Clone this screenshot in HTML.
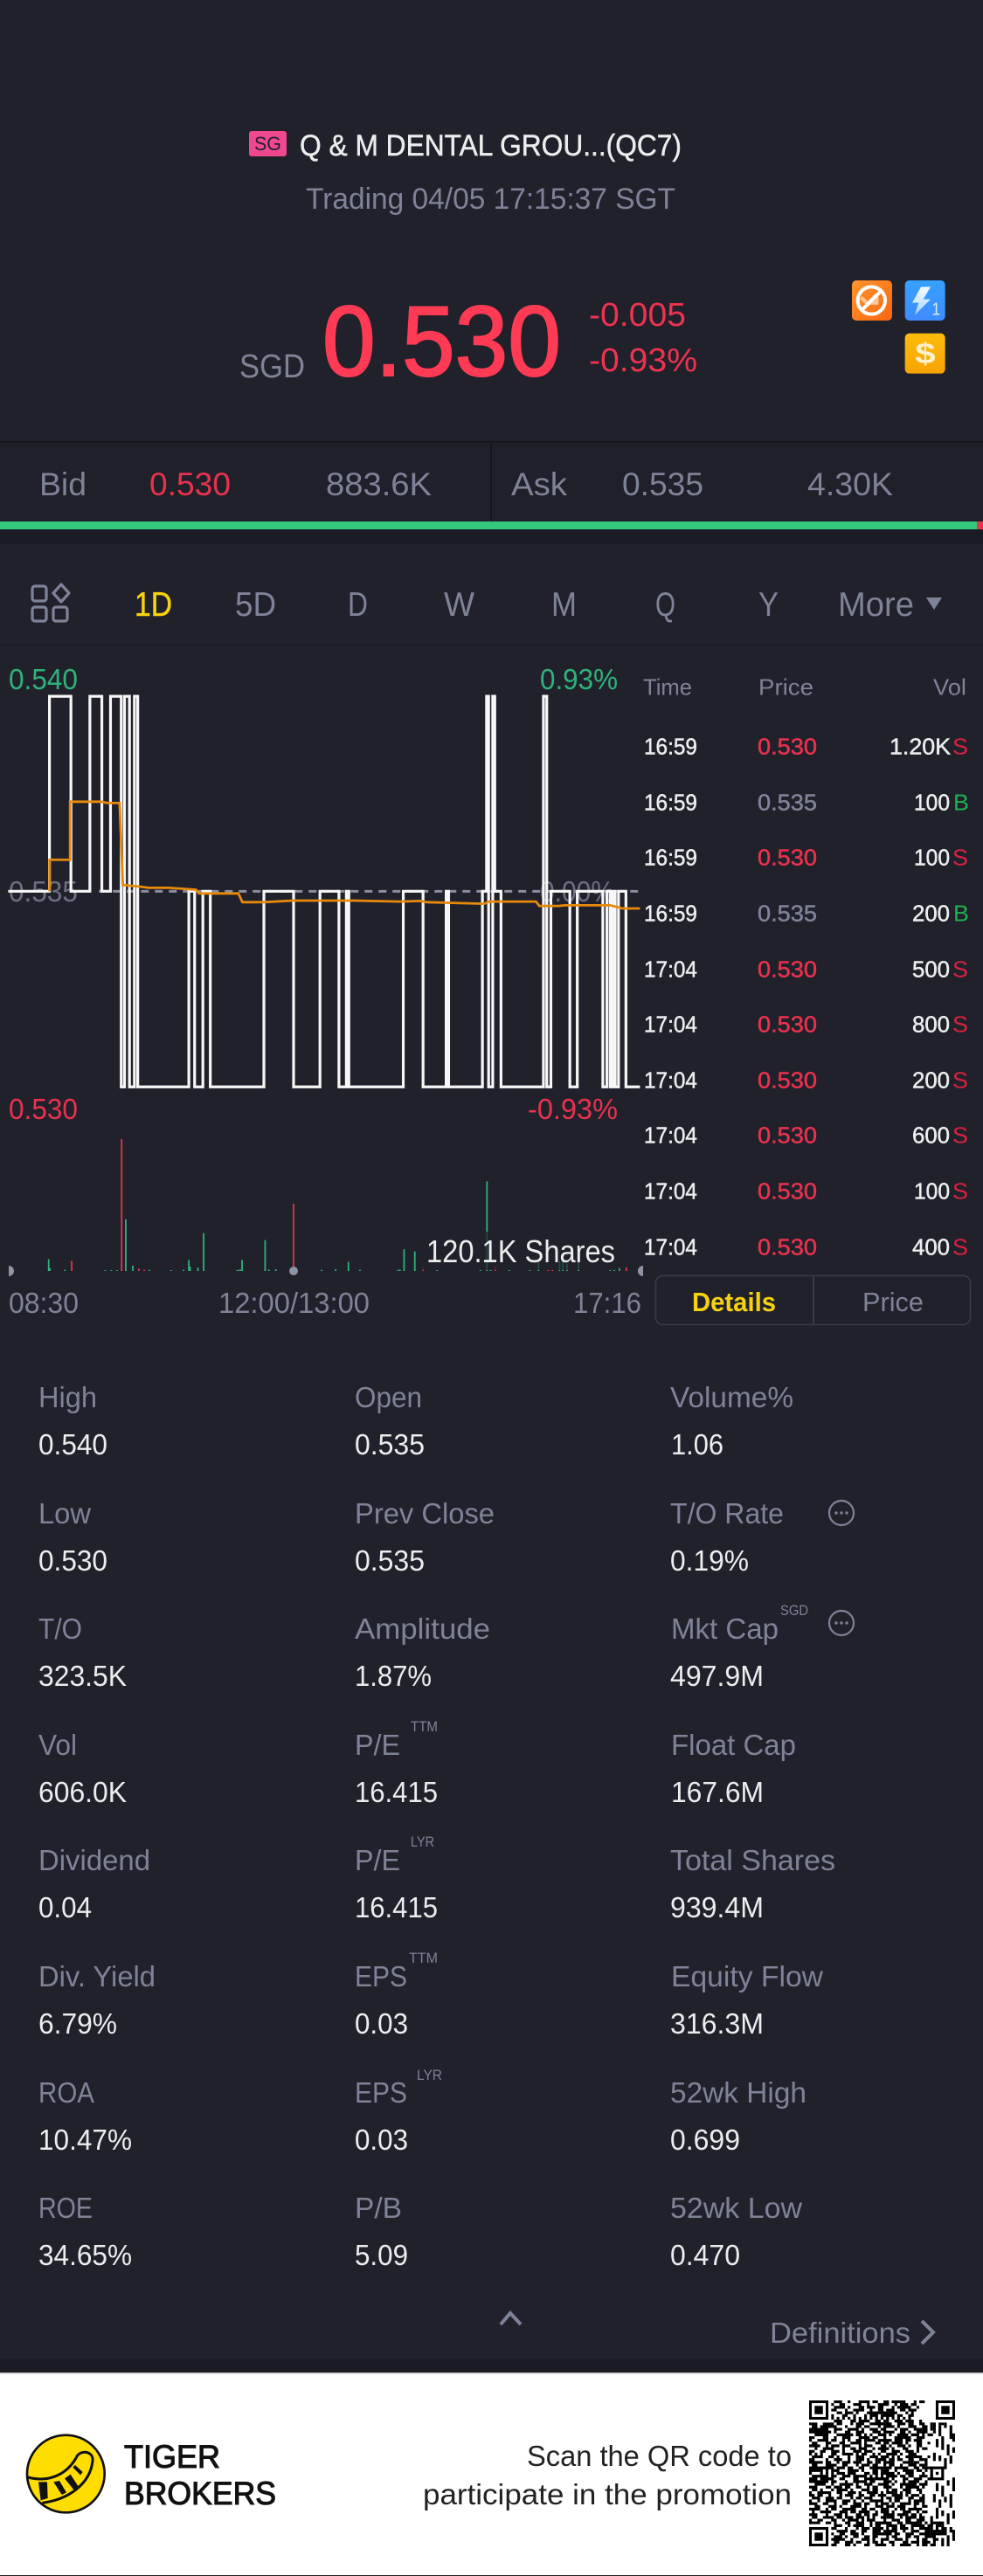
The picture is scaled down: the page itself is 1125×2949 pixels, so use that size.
<!DOCTYPE html>
<html><head><meta charset="utf-8"><title>Q &amp; M Dental</title>
<style>
html,body{margin:0;padding:0;background:#20212b}
svg{display:block}
text{font-family:"Liberation Sans",sans-serif;white-space:pre}
.g{fill:#7f8397}.w{fill:#eceded}.r{fill:#e8324e}.n{fill:#2fb27c}.y{fill:#f7d20f}
.s33{font-size:33px}.s38{font-size:38px}.s27{font-size:27px}.s26{font-size:26px}.s14{font-size:14px}
.v{vector-effect:non-scaling-stroke;fill:none}
</style></head><body>
<svg xmlns="http://www.w3.org/2000/svg" width="1125" height="2949" viewBox="0 0 1125 2949">
<defs>
<linearGradient id="go" x1="0" y1="0" x2="1" y2="1"><stop offset="0" stop-color="#ff962e"/><stop offset="1" stop-color="#f9650f"/></linearGradient>
<linearGradient id="gb" x1="0" y1="0" x2="0" y2="1"><stop offset="0" stop-color="#36a1ff"/><stop offset="1" stop-color="#3f8cff"/></linearGradient>
<linearGradient id="gl" x1="0" y1="0" x2="0" y2="1"><stop offset="0" stop-color="#f4fbff"/><stop offset="1" stop-color="#a9d6ff"/></linearGradient>
<linearGradient id="gy" x1="0" y1="0" x2="0" y2="1"><stop offset="0" stop-color="#fdbb0c"/><stop offset="1" stop-color="#f6a405"/></linearGradient>
<clipPath id="qc"><rect width="53" height="53"/></clipPath>
</defs>
<rect width="1125" height="2949" fill="#20212b"/>

<!-- header -->
<rect x="285" y="150" width="43" height="29" rx="3" fill="#f0488f"/>
<text x="291" y="172" font-size="22" fill="#20212b" textLength="31" lengthAdjust="spacingAndGlyphs">SG</text>
<text x="343" y="178" font-size="34" class="w" stroke="#eceded" stroke-width=".5" textLength="437" lengthAdjust="spacingAndGlyphs">Q &amp; M DENTAL GROU...(QC7)</text>
<text x="350" y="239" font-size="34" class="g" textLength="423" lengthAdjust="spacingAndGlyphs">Trading 04/05 17:15:37 SGT</text>
<text x="274" y="432" class="s38 g" textLength="75" lengthAdjust="spacingAndGlyphs">SGD</text>
<text x="369" y="430" font-size="114" fill="#ff3a55" stroke="#ff3a55" stroke-width="2" textLength="273" lengthAdjust="spacingAndGlyphs">0.530</text>
<text x="674" y="373" class="s38" fill="#ee3350" textLength="111" lengthAdjust="spacingAndGlyphs">-0.005</text>
<text x="674" y="425" class="s38" fill="#ee3350" textLength="124" lengthAdjust="spacingAndGlyphs">-0.93%</text>

<!-- badges -->
<g transform="translate(900,300) scale(.3333)">
<rect x="225" y="63" width="138" height="138" rx="15" fill="url(#go)"/>
<path d="M256 122l24 22 28-30 M288 140h22v-22" fill="none" stroke="#ffc594" stroke-width="13"/>
<circle cx="292" cy="132" r="47" fill="none" stroke="#fff" stroke-width="12"/>
<path d="M258 166L326 98" stroke="#fff" stroke-width="12"/>
<rect x="407" y="63" width="138" height="138" rx="15" fill="url(#gb)"/>
<path d="M462 85h33l-25 43h25l-54 54 13-42h-22z" fill="url(#gl)"/>
<text x="500" y="182" font-size="62" fill="#d9eeff" textLength="28" lengthAdjust="spacingAndGlyphs">1</text>
<rect x="407" y="245" width="138" height="138" rx="15" fill="url(#gy)"/>
<text x="442" y="348" font-size="100" font-weight="bold" fill="#fff1c9" textLength="70" lengthAdjust="spacingAndGlyphs">$</text>
</g>

<!-- bid/ask -->
<rect y="505" width="1125" height="92" fill="#1f2029"/>
<rect y="505" width="1125" height="1.5" fill="#14151b"/>
<rect x="561.5" y="505" width="1.5" height="92" fill="#14151b"/>
<text x="45" y="567" font-size="37" class="g" textLength="54" lengthAdjust="spacingAndGlyphs">Bid</text>
<text x="171" y="567" font-size="37" class="r" textLength="93" lengthAdjust="spacingAndGlyphs">0.530</text>
<text x="373" y="567" font-size="37" class="g" textLength="121" lengthAdjust="spacingAndGlyphs">883.6K</text>
<text x="585" y="567" font-size="37" class="g" textLength="64" lengthAdjust="spacingAndGlyphs">Ask</text>
<text x="712" y="567" font-size="37" class="g" textLength="93" lengthAdjust="spacingAndGlyphs">0.535</text>
<text x="924" y="567" font-size="37" class="g" textLength="98" lengthAdjust="spacingAndGlyphs">4.30K</text>
<rect y="597" width="1118" height="9" fill="#35c77f"/>
<rect x="1118" y="597" width="7" height="9" fill="#ea3350"/>
<rect y="606" width="1125" height="17" fill="#1a1b24"/>

<!-- tabs -->
<g fill="none" stroke="#7f8397" stroke-width="3.2">
<rect x="37" y="671" width="16" height="17" rx="3"/>
<rect x="37" y="695" width="16" height="16" rx="3"/>
<rect x="61" y="695" width="16" height="16" rx="3"/>
<path d="M70 669l9 10-9 10-9-10z" stroke-linejoin="round"/>
</g>
<text x="154" y="705" font-size="39" class="y" stroke="#f7d20f" stroke-width=".5" textLength="43" lengthAdjust="spacingAndGlyphs">1D</text>
<text x="269" y="705" font-size="39" class="g" textLength="47" lengthAdjust="spacingAndGlyphs">5D</text>
<text x="398" y="705" font-size="39" class="g" textLength="23" lengthAdjust="spacingAndGlyphs">D</text>
<text x="508" y="705" font-size="39" class="g" textLength="35" lengthAdjust="spacingAndGlyphs">W</text>
<text x="631" y="705" font-size="39" class="g" textLength="29" lengthAdjust="spacingAndGlyphs">M</text>
<text x="750" y="705" font-size="39" class="g" textLength="23" lengthAdjust="spacingAndGlyphs">Q</text>
<text x="868" y="705" font-size="39" class="g" textLength="23" lengthAdjust="spacingAndGlyphs">Y</text>
<text x="959" y="705" font-size="39" class="g" textLength="87" lengthAdjust="spacingAndGlyphs">More</text>
<path d="M1060 684h18l-9 14z" fill="#7f8397"/>
<rect y="738" width="1125" height="1.5" fill="#1a1b24"/>

<!-- chart labels -->
<text x="10" y="789" class="s33 n" textLength="79" lengthAdjust="spacingAndGlyphs">0.540</text>
<text x="618" y="789" class="s33 n" textLength="89" lengthAdjust="spacingAndGlyphs">0.93%</text>
<text x="10" y="1032" class="s33 g" opacity=".8" textLength="79" lengthAdjust="spacingAndGlyphs">0.535</text>
<text x="618" y="1032" class="s33 g" opacity=".8" textLength="85" lengthAdjust="spacingAndGlyphs">0.00%</text>
<text x="10" y="1281" class="s33 r" textLength="79" lengthAdjust="spacingAndGlyphs">0.530</text>
<text x="604" y="1281" class="s33 r" textLength="103" lengthAdjust="spacingAndGlyphs">-0.93%</text>

<!-- chart lines -->
<g transform="translate(0,740) scale(.4719,.3571)">
<path class="v" d="M240 785H1552" stroke="#8a8ea0" stroke-width="3" stroke-dasharray="9 7"/>
<path class="v" stroke="#f7f7f7" stroke-width="3.2" d="M20 785H120V160H172V785H218V160H247V785H268V160H294V1412H302V160H314V1412H326V160H334V1412H458V785H472V1412H492V785H510V1412H640V785H712V1412H776V785H822V1412H840V785H846V1412H978V785H1026V1412H1082V785H1088V1412H1170V785H1180V160H1185V1412H1195V160H1200V785H1215V1412H1318V160H1326V1412H1336V785H1382V1412H1400V785H1462V1412H1472V785H1480V1412H1486V785H1492V1412H1500V785H1518V1412H1552"/>
<path class="v" stroke="#e8890c" stroke-width="2.8" d="M120 785V684H170V498H245L260 502H290L298 765L340 770L360 774H410L475 780L483 792H578L588 820H640L710 815H860L970 818L1020 816L1035 820L1175 825L1185 818H1300L1308 832H1355L1370 830H1480L1510 840H1552"/>
</g>

<!-- volume bars -->
<g transform="translate(0,1280) scale(.4719,.3333)">
<path class="v" stroke="#2fb27c" stroke-width="1.8" d="M118 525V485M121 525V515M305 525V348M322 525V507M458 525V487M461 525V510M480 525V513M494 525V395M587 525V487M583 525V520M578 525V521M643 525V419M652 525V520M669 525V519M845 525V494M814 525V519M873 525V521M980 525V450M965 525V521M970 525V520M1006 525V458M1181 525V217M1306 525V490M1357 525V490M1365 525V490M1375 525V500M1403 525V495M1502 525V515M1490 525V521M1480 525V521M157 525V521M255 525V522M270 525V522M284 525V522M362 525V521M415 525V522M445 525V521M575 525V522M780 525V521M1060 525V522M1165 525V521M1190 525V521M1235 525V521M1285 525V521"/>
<path class="v" stroke="#e8324e" stroke-width="1.8" d="M174 525V490M295 525V72M337 525V517M350 525V521M712 525V294M1026 525V515M1201 525V510M1330 525V520M1340 525V520M1519 525V513"/>
</g>
<circle cx="336" cy="1455" r="5" fill="#8f93a6"/>
<path d="M10 1449a6 6 0 0 1 0 12z" fill="#8f93a6"/>
<path d="M736 1449a6 6 0 0 0 0 12z" fill="#8f93a6"/>
<rect x="480" y="1410" width="228" height="44" fill="#20212b" opacity=".72"/>
<text x="488" y="1445" font-size="36" fill="#eceded" textLength="216" lengthAdjust="spacingAndGlyphs">120.1K Shares</text>
<text x="10" y="1503" class="s33 g" textLength="80" lengthAdjust="spacingAndGlyphs">08:30</text>
<text x="250" y="1503" class="s33 g" textLength="173" lengthAdjust="spacingAndGlyphs">12:00/13:00</text>
<text x="656" y="1503" class="s33 g" textLength="78" lengthAdjust="spacingAndGlyphs">17:16</text>

<!-- tick list -->
<g transform="translate(-1,-1.5)">
<text x="737" y="797" class="s26 g" textLength="56" lengthAdjust="spacingAndGlyphs">Time</text>
<text x="869" y="797" class="s26 g" textLength="63" lengthAdjust="spacingAndGlyphs">Price</text>
<text x="1069" y="797" class="s26 g" textLength="38" lengthAdjust="spacingAndGlyphs">Vol</text>
<g class="s26" stroke-width=".5">
<text x="738" y="865" class="w" stroke="#eceded" textLength="61" lengthAdjust="spacingAndGlyphs">16:59</text>
<text x="738" y="929" class="w" stroke="#eceded" textLength="61" lengthAdjust="spacingAndGlyphs">16:59</text>
<text x="738" y="992" class="w" stroke="#eceded" textLength="61" lengthAdjust="spacingAndGlyphs">16:59</text>
<text x="738" y="1056" class="w" stroke="#eceded" textLength="61" lengthAdjust="spacingAndGlyphs">16:59</text>
<text x="738" y="1120" class="w" stroke="#eceded" textLength="61" lengthAdjust="spacingAndGlyphs">17:04</text>
<text x="738" y="1183" class="w" stroke="#eceded" textLength="61" lengthAdjust="spacingAndGlyphs">17:04</text>
<text x="738" y="1247" class="w" stroke="#eceded" textLength="61" lengthAdjust="spacingAndGlyphs">17:04</text>
<text x="738" y="1310" class="w" stroke="#eceded" textLength="61" lengthAdjust="spacingAndGlyphs">17:04</text>
<text x="738" y="1374" class="w" stroke="#eceded" textLength="61" lengthAdjust="spacingAndGlyphs">17:04</text>
<text x="738" y="1438" class="w" stroke="#eceded" textLength="61" lengthAdjust="spacingAndGlyphs">17:04</text>
<text x="868" y="865" class="r" stroke="#e8324e" textLength="68" lengthAdjust="spacingAndGlyphs">0.530</text>
<text x="868" y="929" class="g" stroke="#7f8397" textLength="68" lengthAdjust="spacingAndGlyphs">0.535</text>
<text x="868" y="992" class="r" stroke="#e8324e" textLength="68" lengthAdjust="spacingAndGlyphs">0.530</text>
<text x="868" y="1056" class="g" stroke="#7f8397" textLength="68" lengthAdjust="spacingAndGlyphs">0.535</text>
<text x="868" y="1120" class="r" stroke="#e8324e" textLength="68" lengthAdjust="spacingAndGlyphs">0.530</text>
<text x="868" y="1183" class="r" stroke="#e8324e" textLength="68" lengthAdjust="spacingAndGlyphs">0.530</text>
<text x="868" y="1247" class="r" stroke="#e8324e" textLength="68" lengthAdjust="spacingAndGlyphs">0.530</text>
<text x="868" y="1310" class="r" stroke="#e8324e" textLength="68" lengthAdjust="spacingAndGlyphs">0.530</text>
<text x="868" y="1374" class="r" stroke="#e8324e" textLength="68" lengthAdjust="spacingAndGlyphs">0.530</text>
<text x="868" y="1438" class="r" stroke="#e8324e" textLength="68" lengthAdjust="spacingAndGlyphs">0.530</text>
<text x="1019" y="865" class="w" stroke="#eceded" textLength="70" lengthAdjust="spacingAndGlyphs">1.20K</text>
<text x="1047" y="929" class="w" stroke="#eceded" textLength="41" lengthAdjust="spacingAndGlyphs">100</text>
<text x="1047" y="992" class="w" stroke="#eceded" textLength="41" lengthAdjust="spacingAndGlyphs">100</text>
<text x="1045" y="1056" class="w" stroke="#eceded" textLength="43" lengthAdjust="spacingAndGlyphs">200</text>
<text x="1045" y="1120" class="w" stroke="#eceded" textLength="43" lengthAdjust="spacingAndGlyphs">500</text>
<text x="1045" y="1183" class="w" stroke="#eceded" textLength="43" lengthAdjust="spacingAndGlyphs">800</text>
<text x="1045" y="1247" class="w" stroke="#eceded" textLength="43" lengthAdjust="spacingAndGlyphs">200</text>
<text x="1045" y="1310" class="w" stroke="#eceded" textLength="43" lengthAdjust="spacingAndGlyphs">600</text>
<text x="1047" y="1374" class="w" stroke="#eceded" textLength="41" lengthAdjust="spacingAndGlyphs">100</text>
<text x="1045" y="1438" class="w" stroke="#eceded" textLength="43" lengthAdjust="spacingAndGlyphs">400</text>
</g>
<g class="s26">
<text x="1091" y="865" fill="#d9213f" textLength="18" lengthAdjust="spacingAndGlyphs">S</text>
<text x="1092" y="929" fill="#1db04f" textLength="18" lengthAdjust="spacingAndGlyphs">B</text>
<text x="1091" y="992" fill="#d9213f" textLength="18" lengthAdjust="spacingAndGlyphs">S</text>
<text x="1092" y="1056" fill="#1db04f" textLength="18" lengthAdjust="spacingAndGlyphs">B</text>
<text x="1091" y="1120" fill="#d9213f" textLength="18" lengthAdjust="spacingAndGlyphs">S</text>
<text x="1091" y="1183" fill="#d9213f" textLength="18" lengthAdjust="spacingAndGlyphs">S</text>
<text x="1091" y="1247" fill="#d9213f" textLength="18" lengthAdjust="spacingAndGlyphs">S</text>
<text x="1091" y="1310" fill="#d9213f" textLength="18" lengthAdjust="spacingAndGlyphs">S</text>
<text x="1091" y="1374" fill="#d9213f" textLength="18" lengthAdjust="spacingAndGlyphs">S</text>
<text x="1091" y="1438" fill="#d9213f" textLength="18" lengthAdjust="spacingAndGlyphs">S</text>
</g>
</g>

<!-- details/price -->
<rect x="750.5" y="1460.5" width="360" height="56" rx="8" fill="none" stroke="#3a3c4a" stroke-width="1.5"/>
<rect x="930" y="1460" width="2" height="57" fill="#3a3c4a"/>
<text x="792" y="1501" font-size="31" font-weight="bold" class="y" textLength="96" lengthAdjust="spacingAndGlyphs">Details</text>
<text x="987" y="1501" font-size="31" class="g" textLength="70" lengthAdjust="spacingAndGlyphs">Price</text>

<!-- stats -->
<g class="s33 g">
<text x="44" y="1611" textLength="67" lengthAdjust="spacingAndGlyphs">High</text>
<text x="406" y="1611" textLength="77" lengthAdjust="spacingAndGlyphs">Open</text>
<text x="767" y="1611" textLength="141" lengthAdjust="spacingAndGlyphs">Volume%</text>
<text x="44" y="1744" textLength="60" lengthAdjust="spacingAndGlyphs">Low</text>
<text x="406" y="1744" textLength="160" lengthAdjust="spacingAndGlyphs">Prev Close</text>
<text x="767" y="1744" textLength="130" lengthAdjust="spacingAndGlyphs">T/O Rate</text>
<text x="44" y="1876" textLength="50" lengthAdjust="spacingAndGlyphs">T/O</text>
<text x="406" y="1876" textLength="155" lengthAdjust="spacingAndGlyphs">Amplitude</text>
<text x="768" y="1876" textLength="123" lengthAdjust="spacingAndGlyphs">Mkt Cap</text>
<text x="44" y="2009" textLength="44" lengthAdjust="spacingAndGlyphs">Vol</text>
<text x="406" y="2009" textLength="52" lengthAdjust="spacingAndGlyphs">P/E</text>
<text x="768" y="2009" textLength="143" lengthAdjust="spacingAndGlyphs">Float Cap</text>
<text x="44" y="2141" textLength="128" lengthAdjust="spacingAndGlyphs">Dividend</text>
<text x="406" y="2141" textLength="52" lengthAdjust="spacingAndGlyphs">P/E</text>
<text x="767" y="2141" textLength="189" lengthAdjust="spacingAndGlyphs">Total Shares</text>
<text x="44" y="2274" textLength="134" lengthAdjust="spacingAndGlyphs">Div. Yield</text>
<text x="406" y="2274" textLength="60" lengthAdjust="spacingAndGlyphs">EPS</text>
<text x="768" y="2274" textLength="174" lengthAdjust="spacingAndGlyphs">Equity Flow</text>
<text x="44" y="2407" textLength="64" lengthAdjust="spacingAndGlyphs">ROA</text>
<text x="406" y="2407" textLength="60" lengthAdjust="spacingAndGlyphs">EPS</text>
<text x="767" y="2407" textLength="156" lengthAdjust="spacingAndGlyphs">52wk High</text>
<text x="44" y="2539" textLength="62" lengthAdjust="spacingAndGlyphs">ROE</text>
<text x="406" y="2539" textLength="54" lengthAdjust="spacingAndGlyphs">P/B</text>
<text x="767" y="2539" textLength="151" lengthAdjust="spacingAndGlyphs">52wk Low</text>
</g>
<g class="s33 w">
<text x="44" y="1665" textLength="79" lengthAdjust="spacingAndGlyphs">0.540</text>
<text x="406" y="1665" textLength="80" lengthAdjust="spacingAndGlyphs">0.535</text>
<text x="768" y="1665" textLength="60" lengthAdjust="spacingAndGlyphs">1.06</text>
<text x="44" y="1798" textLength="79" lengthAdjust="spacingAndGlyphs">0.530</text>
<text x="406" y="1798" textLength="80" lengthAdjust="spacingAndGlyphs">0.535</text>
<text x="767" y="1798" textLength="90" lengthAdjust="spacingAndGlyphs">0.19%</text>
<text x="44" y="1930" textLength="101" lengthAdjust="spacingAndGlyphs">323.5K</text>
<text x="406" y="1930" textLength="88" lengthAdjust="spacingAndGlyphs">1.87%</text>
<text x="767" y="1930" textLength="107" lengthAdjust="spacingAndGlyphs">497.9M</text>
<text x="44" y="2063" textLength="101" lengthAdjust="spacingAndGlyphs">606.0K</text>
<text x="406" y="2063" textLength="95" lengthAdjust="spacingAndGlyphs">16.415</text>
<text x="768" y="2063" textLength="106" lengthAdjust="spacingAndGlyphs">167.6M</text>
<text x="44" y="2195" textLength="61" lengthAdjust="spacingAndGlyphs">0.04</text>
<text x="406" y="2195" textLength="95" lengthAdjust="spacingAndGlyphs">16.415</text>
<text x="767" y="2195" textLength="107" lengthAdjust="spacingAndGlyphs">939.4M</text>
<text x="44" y="2328" textLength="90" lengthAdjust="spacingAndGlyphs">6.79%</text>
<text x="406" y="2328" textLength="61" lengthAdjust="spacingAndGlyphs">0.03</text>
<text x="767" y="2328" textLength="107" lengthAdjust="spacingAndGlyphs">316.3M</text>
<text x="44" y="2461" textLength="107" lengthAdjust="spacingAndGlyphs">10.47%</text>
<text x="406" y="2461" textLength="61" lengthAdjust="spacingAndGlyphs">0.03</text>
<text x="767" y="2461" textLength="80" lengthAdjust="spacingAndGlyphs">0.699</text>
<text x="44" y="2593" textLength="107" lengthAdjust="spacingAndGlyphs">34.65%</text>
<text x="406" y="2593" textLength="61" lengthAdjust="spacingAndGlyphs">5.09</text>
<text x="767" y="2593" textLength="80" lengthAdjust="spacingAndGlyphs">0.470</text>
</g>
<g class="g" font-size="17">
<text x="893" y="1849" textLength="32" lengthAdjust="spacingAndGlyphs">SGD</text>
<text x="470" y="1982" textLength="31" lengthAdjust="spacingAndGlyphs">TTM</text>
<text x="470" y="2114" textLength="27" lengthAdjust="spacingAndGlyphs">LYR</text>
<text x="468" y="2247" textLength="33" lengthAdjust="spacingAndGlyphs">TTM</text>
<text x="477" y="2381" textLength="29" lengthAdjust="spacingAndGlyphs">LYR</text>
</g>
<g fill="none" stroke="#7f8397" stroke-width="2.2">
<circle cx="963" cy="1732" r="14"/><circle cx="963" cy="1858" r="14"/>
</g>
<g fill="#7f8397">
<circle cx="957" cy="1732" r="1.7"/><circle cx="963" cy="1732" r="1.7"/><circle cx="969" cy="1732" r="1.7"/>
<circle cx="957" cy="1858" r="1.7"/><circle cx="963" cy="1858" r="1.7"/><circle cx="969" cy="1858" r="1.7"/>
</g>
<path d="M573 2661l11-13 12 13" fill="none" stroke="#7f8397" stroke-width="4"/>
<text x="881" y="2682" font-size="33" class="g" textLength="161" lengthAdjust="spacingAndGlyphs">Definitions</text>
<path d="M1055 2657l13 13-13 13" fill="none" stroke="#7f8397" stroke-width="4"/>

<rect y="2701" width="1125" height="16" fill="#1a1b24"/>
<rect y="2717" width="1125" height="231" fill="#fff"/>
<rect y="2716" width="1125" height="1.5" fill="#bdbdbd"/>
<rect y="2948" width="1125" height="1" fill="#222"/>

<!-- logo -->
<g transform="translate(0,2780) scale(.3333)">
<circle cx="226" cy="156" r="133" fill="#ffdd00" stroke="#111" stroke-width="8"/>
<path d="M96 168C160 185 225 165 262 100C274 72 322 76 318 112C310 190 235 245 145 256" fill="none" stroke="#111" stroke-width="9"/>
<path d="M132 184h30l2 56-24 7zM184 184l20-4 24 40-16 8zM222 172l20-14 30 46-16 10zM250 134l8-8 26 24-8 10z" fill="#111"/>
</g>
<text x="142" y="2825" font-size="37" fill="#111" stroke="#111" stroke-width="1.1" textLength="110" lengthAdjust="spacingAndGlyphs">TIGER</text>
<text x="142" y="2867" font-size="37" fill="#111" stroke="#111" stroke-width="1.1" textLength="174" lengthAdjust="spacingAndGlyphs">BROKERS</text>
<text x="603" y="2823" font-size="33" fill="#222" textLength="303" lengthAdjust="spacingAndGlyphs">Scan the QR code to</text>
<text x="484" y="2867" font-size="33" fill="#222" textLength="422" lengthAdjust="spacingAndGlyphs">participate in the promotion</text>

<!-- QR -->
<g transform="translate(926,2748) scale(3.151)">
<g clip-path="url(#qc)">
<path fill="none" stroke="#000" stroke-width="1" d="
M9 .5h3m2 0h1m3 0h4m1 0h2m2 0h2m1 0h5m3 0h1m1 0h2
M8 1.5h1m2 0h2m3 0h3m2 0h1m3 0h4m2 0h1m1 0h3m1 0h2
M9 2.5h4m1 0h1m3 0h2m1 0h3m1 0h2m3 0h1m1 0h5m2 0h1
M8 3.5h2m3 0h1m2 0h4m2 0h1m2 0h2m1 0h3m2 0h2m1 0h3
M10 4.5h2m1 0h3m1 0h1m3 0h4m2 0h1m1 0h3m3 0h1m1 0h1
M8 5.5h1m3 0h2m2 0h1m3 0h1m1 0h3m1 0h5m1 0h2m2 0h2
M8 6.5h1m1 0h1m1 0h1m1 0h1m1 0h1m1 0h1m1 0h1m1 0h1m1 0h1m1 0h1m1 0h1m1 0h1m1 0h1m1 0h1m1 0h1
M9 7.5h3m3 0h2m1 0h4m2 0h2m1 0h1m3 0h3m1 0h3m2 0h1
M0 8.5h3m2 0h4m1 0h2m3 0h1m1 0h3m2 0h5m1 0h2m2 0h3m1 0h2m2 0h2m2 0h1m2 0h2
M1 9.5h2m1 0h6m3 0h1m3 0h2m1 0h2m3 0h1m1 0h4m1 0h1m3 0h3m2 0h2m1 0h1
M0 10.5h7m2 0h3m2 0h4m1 0h1m2 0h3m1 0h2m3 0h1m1 0h3m2 0h1m1 0h3m1 0h1
M0 11.5h8m1 0h1m3 0h2m2 0h3m3 0h3m1 0h4m2 0h2m1 0h1m3 0h3m2 0h1
M2 12.5h5m3 0h4m1 0h1m1 0h2m3 0h1m2 0h3m1 0h1m2 0h4m1 0h2m2 0h1m1 0h2
M0 13.5h2m3 0h2m2 0h1m2 0h3m3 0h4m1 0h2m2 0h1m3 0h2m1 0h3m3 0h2
M0 14.5h1m2 0h4m1 0h2m2 0h1m1 0h1m2 0h2m2 0h3m1 0h5m1 0h2m2 0h2m1 0h3
M1 15.5h2m3 0h2m3 0h2m2 0h4m1 0h1m3 0h2m2 0h1m1 0h3m2 0h1m3 0h2m2 0h1
M0 16.5h4m2 0h1m1 0h3m1 0h3m3 0h1m1 0h3m3 0h2m1 0h1m2 0h3m1 0h1m2 0h2
M2 17.5h1m2 0h4m3 0h1m2 0h2m1 0h3m2 0h1m1 0h4m1 0h1m3 0h2m3 0h1m1 0h2
M0 18.5h2m2 0h2m2 0h3m1 0h1m3 0h3m1 0h3m3 0h2m2 0h3m2 0h3m1 0h1
M0 19.5h1m1 0h1m1 0h1m3 0h2m2 0h4m1 0h1m1 0h2m2 0h1m1 0h1m2 0h4m1 0h1m2 0h3
M1 20.5h4m2 0h2m1 0h1m3 0h1m2 0h3m2 0h3m1 0h3m3 0h1m2 0h2m1 0h3m2 0h1
M0 21.5h2m4 0h1m2 0h3m2 0h1m3 0h2m1 0h1m3 0h3m1 0h2m1 0h2m2 0h1m3 0h2
M0 22.5h5m1 0h2m2 0h1m1 0h3m1 0h3m2 0h2m2 0h1m1 0h4m3 0h3m1 0h2m2 0h1
M1 23.5h2m3 0h4m2 0h2m3 0h1m1 0h3m1 0h2m2 0h1m1 0h2m2 0h1m2 0h3m1 0h2
M0 24.5h8m2 0h3m1 0h2m2 0h2m2 0h4m2 0h2m1 0h5m2 0h2m1 0h4
M0 25.5h4m2 0h1m2 0h2m3 0h4m1 0h1m3 0h2m1 0h3m2 0h1m2 0h4m1 0h2m1 0h1
M0 26.5h1m9 0h3m1 0h3m3 0h2m1 0h2m2 0h4m1 0h1m2 0h3m3 0h1m4 0h1
M1 27.5h6m2 0h1m2 0h3m1 0h5m1 0h1m3 0h1m1 0h4m1 0h2m1 0h2m2 0h3m1 0h1
M0 28.5h3m2 0h4m2 0h2m3 0h2m2 0h4m1 0h3m2 0h1m3 0h2m2 0h3m2 0h2
M0 29.5h7m1 0h2m3 0h1m2 0h5m1 0h2m3 0h3m1 0h1m2 0h1m1 0h4m2 0h1
M2 30.5h4m2 0h1m3 0h4m1 0h1m2 0h3m2 0h4m1 0h1m2 0h3m1 0h2m1 0h3
M0 31.5h3m3 0h2m1 0h2m2 0h2m2 0h2m2 0h1m1 0h2m2 0h3m3 0h1m1 0h5m1 0h1
M1 32.5h2m1 0h1m3 0h1m1 0h4m1 0h1m3 0h3m1 0h2m3 0h1m1 0h2m2 0h3m2 0h2
M0 33.5h1m2 0h5m2 0h2m2 0h3m1 0h1m2 0h4m1 0h1m1 0h3m2 0h1m1 0h2m3 0h1
M0 34.5h2m1 0h2m2 0h1m3 0h1m1 0h3m2 0h2m2 0h1m2 0h3m2 0h4m1 0h1m1 0h3
M1 35.5h3m2 0h3m1 0h2m3 0h1m1 0h2m1 0h3m3 0h1m1 0h2m1 0h3m2 0h2m2 0h2
M0 36.5h1m2 0h1m2 0h4m2 0h3m1 0h1m2 0h1m2 0h5m2 0h1m1 0h2m3 0h1m1 0h3
M0 37.5h3m2 0h2m2 0h1m2 0h2m2 0h3m1 0h2m2 0h1m1 0h3m1 0h1m2 0h4m1 0h2
M2 38.5h2m3 0h3m1 0h1m3 0h4m1 0h1m3 0h3m2 0h2m1 0h3m3 0h1m2 0h2
M0 39.5h4m2 0h1m1 0h2m2 0h1m1 0h3m2 0h2m1 0h2m2 0h2m3 0h1m1 0h2m1 0h5
M1 40.5h1m2 0h4m3 0h2m2 0h2m1 0h4m2 0h1m1 0h3m1 0h1m3 0h3m2 0h1m1 0h2
M0 41.5h3m3 0h1m2 0h3m1 0h1m3 0h2m1 0h1m2 0h2m2 0h4m1 0h3m2 0h2m1 0h1
M1 42.5h2m2 0h4m1 0h2m2 0h2m1 0h3m3 0h1m2 0h2m1 0h2m2 0h1m1 0h4m1 0h2
M0 43.5h1m2 0h2m3 0h2m2 0h1m1 0h4m1 0h1m1 0h3m3 0h1m2 0h3m2 0h2m2 0h3
M0 44.5h4m2 0h2m1 0h1m3 0h2m2 0h3m2 0h1m1 0h4m1 0h1m2 0h2m1 0h5m2 0h1
M9 45.5h3m2 0h1m1 0h4m2 0h1m1 0h2m3 0h3m1 0h2m2 0h5m1 0h2m1 0h1
M8 46.5h2m3 0h1m3 0h1m1 0h3m1 0h1m1 0h2m3 0h2m1 0h3m1 0h1m2 0h4m2 0h1
M10 47.5h4m1 0h2m2 0h2m2 0h3m1 0h5m2 0h1m2 0h3m2 0h2m1 0h3
M8 48.5h1m2 0h2m2 0h3m1 0h1m3 0h1m2 0h4m1 0h2m2 0h3m2 0h4m1 0h1
M9 49.5h3m1 0h1m2 0h2m2 0h2m1 0h2m3 0h1m1 0h2m3 0h2m1 0h2m2 0h4
M8 50.5h5m2 0h1m3 0h3m1 0h1m2 0h3m2 0h3m1 0h1m3 0h1m1 0h2m2 0h2
M9 51.5h2m2 0h3m1 0h2m2 0h1m1 0h2m1 0h1m2 0h2m3 0h2m1 0h3m1 0h3
M8 52.5h2m3 0h2m1 0h1m3 0h2m2 0h4m2 0h1m2 0h4m2 0h1m1 0h2m1 0h2
"/>
<path fill="none" stroke="#000" stroke-width="1" d="
M45.5 8v3M47.5 9v4M49.5 8v2M51.5 9v5M52.5 12v3M46.5 14v3M48.5 13v5M50.5 16v4M52.5 17v2M45.5 19v3M47.5 20v2M49.5 21v4M51.5 20v3
M46.5 30v3M48.5 31v4M50.5 29v2M52.5 28v5M45.5 34v3M47.5 36v3M49.5 35v2M51.5 34v5M52.5 40v3M46.5 39v4M48.5 40v2M50.5 41v4M44.5 42v3M47.5 44v2
M49.5 46v3M50.5 49v4M51.5 46v2M52.5 47v4M48.5 50v3M47.5 47v2M45.5 50v2
M14.5 10v4M20.5 12v3M27.5 11v5M33.5 13v3M39.5 10v4M17.5 18v4M24.5 20v3M30.5 17v5M37.5 19v4M42.5 21v3
M11.5 30v5M18.5 33v3M23.5 31v4M31.5 32v5M36.5 30v3M41.5 34v4M13.5 39v4M21.5 41v3M28.5 38v5M35.5 40v4M40.5 42v3"/>
</g>
<path fill="#fff" d="M7 0h1v8H0V7h7zM45 0h1v7h7v1h-8zM0 45h8v8H7v-7H0z"/>
<path d="M0 0h7v7H0zM1 1v5h5V1zM46 0h7v7h-7zM47 1v5h5V1zM0 46h7v7H0zM1 47v5h5v-5z" fill="#000" fill-rule="evenodd"/>
<path fill="#fff" d="M1 1h5v5H1zM47 1h5v5h-5zM1 47h5v5H1z"/>
<g fill="none" stroke="#000">
<rect x="24.5" y="24.5" width="4" height="4"/><rect x="44.5" y="24.5" width="4" height="4"/><rect x="4.5" y="24.5" width="4" height="4"/><rect x="24.5" y="44.5" width="4" height="4"/><rect x="44.5" y="44.5" width="4" height="4"/><rect x="24.5" y="4.5" width="4" height="4"/>
</g>
<path d="M2 2h3v3H2zM48 2h3v3h-3zM2 48h3v3H2zM26 26h1v1h-1zM46 26h1v1h-1zM6 26h1v1H6zM26 46h1v1h-1zM46 46h1v1h-1zM26 6h1v1h-1z" fill="#000"/>
</g>
</svg>
</body></html>
